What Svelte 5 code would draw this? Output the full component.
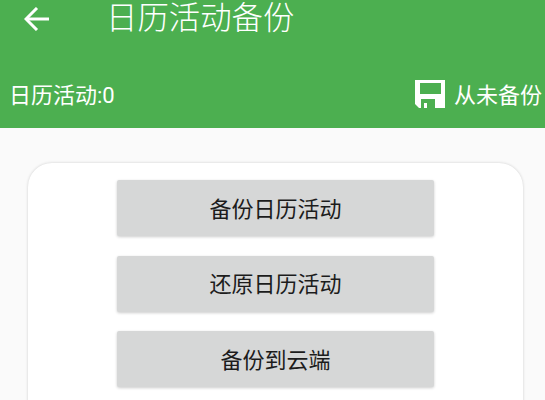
<script lang="ts">
	const actions = ['备份日历活动', '还原日历活动', '备份到云端'];
</script>

<div class="page">
	<header class="header">
		<div class="toolbar">
			<button class="back" aria-label="返回">
				<svg viewBox="0 0 26 24" width="26" height="24" fill="none" stroke="#fff" stroke-width="3">
					<path d="M25 12H2" />
					<path d="M13 1 2 12l11 11" />
				</svg>
			</button>
			<h1 class="title">日历活动备份</h1>
		</div>
		<div class="status">
			<span class="count">日历活动:0</span>
			<div class="state">
				<svg class="disk" viewBox="0 0 30 28" width="30" height="28">
					<path
						fill="#fff"
						fill-rule="evenodd"
						d="M0 0H30V28H4L0 24ZM5 3V14H26V3ZM6 19V28H9V23H12V28H20V19Z"
					/>
				</svg>
				<span>从未备份</span>
			</div>
		</div>
	</header>

	<main class="content">
		<section class="card">
			{#each actions as action}
				<button class="action">{action}</button>
			{/each}
		</section>
	</main>
</div>

<style>
	:global(body) {
		margin: 0;
		overflow: hidden;
	}

	.page {
		width: 545px;
		height: 400px;
		overflow: hidden;
		background: #fafafa;
		font-family: 'Roboto', 'Noto Sans CJK SC', sans-serif;
	}

	.header {
		height: 128px;
		background: #4caf50;
		color: #fff;
		display: flex;
		flex-direction: column;
	}

	.toolbar {
		height: 38px;
		display: flex;
		align-items: center;
	}

	.back {
		width: 26px;
		height: 24px;
		margin-left: 24px;
		padding: 0;
		border: 0;
		background: none;
		display: flex;
	}

	.title {
		margin: 0 0 0 56px;
		font-size: 31.4px;
		font-weight: 300;
		line-height: 38px;
	}

	.status {
		margin-top: 24px;
		height: 62px;
		padding: 0 3px 0 9px;
		display: flex;
		align-items: center;
		justify-content: space-between;
		font-size: 22px;
	}

	.state {
		display: flex;
		align-items: center;
		gap: 9px;
	}

	.disk {
		margin-top: 2px;
	}

	.content {
		padding: 35px 22px 0 28px;
	}

	.card {
		height: 300px;
		padding-top: 17px;
		background: #fff;
		border-radius: 24px;
		box-shadow: 0 0 3px rgba(0, 0, 0, 0.18);
		display: flex;
		flex-direction: column;
		align-items: center;
		gap: 19.5px;
	}

	.action {
		width: 317px;
		height: 56px;
		flex: none;
		padding-bottom: 4px;
		border: 0;
		border-radius: 2px;
		background: #d6d7d7;
		color: #1c1c1c;
		font: inherit;
		font-size: 22px;
		box-shadow: 0 1px 3px rgba(0, 0, 0, 0.2);
	}
</style>
